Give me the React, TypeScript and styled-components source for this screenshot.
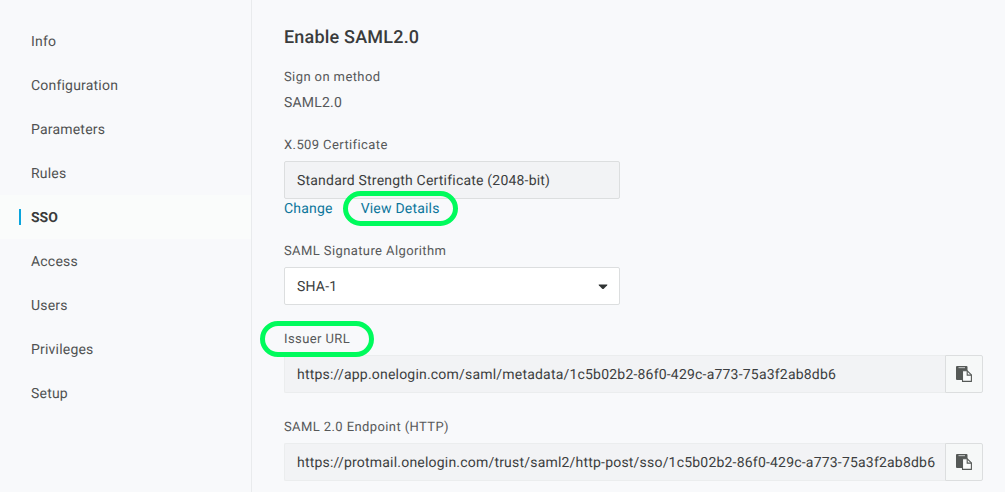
import React from "react";
import styled, { createGlobalStyle, css } from "styled-components";

const GlobalStyle = createGlobalStyle`
  *, *::before, *::after { box-sizing: border-box; }
  body {
    margin: 0;
    background: #f8f9fb;
    color: #56585a;
    font-family: Roboto, "Liberation Sans", sans-serif;
    font-size: 14px;
    overflow: hidden;
    text-rendering: geometricPrecision;
  }
`;

const Page = styled.div`
  display: flex;
  height: 492px;
  overflow: hidden;
`;

const Sidebar = styled.nav`
  flex: 0 0 252px;
  padding-top: 19px;
  border-right: 1px solid #e9ebed;
`;

const NavItem = styled.a<{ $active?: boolean }>`
  display: flex;
  align-items: center;
  height: 44px;
  padding: 2px 0 0 19px;
  letter-spacing: 0.2px;
  color: #505252;

  &::before {
    content: "";
    width: 2px;
    height: 16px;
    margin: -2px 10px 0 0;
  }

  ${({ $active }) =>
    $active &&
    css`
      background: #fafcfb;
      color: #3a3c3c;
      font-weight: 700;
      letter-spacing: 0;
      &::before {
        background: #0aa5dd;
      }
    `}
`;

const Content = styled.main`
  flex: 1;
  min-width: 0;
  padding: 27px 22px 0 32px;
`;

const Title = styled.h1`
  margin: 0 0 20px;
  font-size: 18px;
  line-height: 22px;
  font-weight: 500;
  letter-spacing: 0.2px;
  color: #3a3c3c;
`;

const Field = styled.section<{ $gap: number }>`
  margin-bottom: ${({ $gap }) => $gap}px;
`;

const Label = styled.div`
  height: 16px;
  margin-bottom: 8px;
  font-size: 13px;
  line-height: 18px;
  letter-spacing: 0.4px;
  color: #565859;
`;

const Value = styled.div`
  height: 18px;
  line-height: 20px;
  letter-spacing: 0.2px;
`;

const Box = styled.div<{ $tone: "select" | "fixed" | "url" }>`
  display: flex;
  align-items: center;
  justify-content: space-between;
  height: 38px;
  min-width: 0;
  width: ${({ $tone }) => ($tone === "url" ? "auto" : "336px")};
  flex: ${({ $tone }) => ($tone === "url" ? "1" : "none")};
  padding: 2px ${({ $tone }) => ($tone === "url" ? "0" : "11px")} 0 12px;
  border: 1px solid ${({ $tone }) => ($tone === "url" ? "#ebedee" : "#dcdedf")};
  border-right-width: ${({ $tone }) => ($tone === "url" ? "0" : "1px")};
  border-radius: ${({ $tone }) => ($tone === "url" ? "2px 0 0 2px" : "2px")};
  background: ${({ $tone }) => ($tone === "select" ? "#fff" : "#f2f3f5")};
  letter-spacing: 0.2px;
  color: #3c3e40;
  white-space: nowrap;
`;

const UrlRow = styled.div`
  display: flex;
`;

const CopyButton = styled.button`
  display: flex;
  flex: none;
  align-items: center;
  justify-content: center;
  width: 38px;
  height: 38px;
  padding: 0;
  border: 1px solid #dcdedf;
  border-radius: 0 2px 2px 0;
  background: #f6f8f8;
`;

const Links = styled.div`
  display: flex;
  gap: 28px;
  height: 19px;
  line-height: 21px;
  color: #0c769c;
  letter-spacing: 0.2px;
`;

const Marked = styled.span<{ $ring: string }>`
  position: relative;
  &::after {
    content: "";
    position: absolute;
    inset: ${({ $ring }) => $ring};
    border: 5px solid #00fb5c;
    border-radius: 18px;
  }
`;

const Caret = () => (
  <svg width="10" height="6" viewBox="0 0 10 6">
    <path d="M1 0.5H9Q9.8 0.5 9.2 1.3L5.8 4.7Q5 5.4 4.2 4.7L0.8 1.3Q0.2 0.5 1 0.5Z" fill="#303434" />
  </svg>
);

const PasteIcon = () => (
  <svg width="16" height="16" viewBox="0 0 16 16">
    <path d="M1 0H10.5Q11.5 0 11.5 1V5H6V14H1Q0 14 0 13V1Q0 0 1 0Z" fill="#555957" />
    <path d="M2.5 1H9V2.2H2.5Z" fill="#b4b7b6" />
    <path d="M6.5 4.8H11.3L15.4 8.9V15.4H6.5Z" fill="#fbfcfc" stroke="#555957" strokeWidth="1.1" strokeLinejoin="round" />
    <path d="M11.2 4.8V9.1H15.4" fill="none" stroke="#555957" strokeWidth="1.1" />
  </svg>
);

const navItems = ["Info", "Configuration", "Parameters", "Rules", "SSO", "Access", "Users", "Privileges", "Setup"];

const UrlField = ({ url }: { url: string }) => (
  <UrlRow>
    <Box $tone="url">{url}</Box>
    <CopyButton aria-label="Copy">
      <PasteIcon />
    </CopyButton>
  </UrlRow>
);

export default function App() {
  return (
    <>
      <GlobalStyle />
      <Page>
        <Sidebar>
          {navItems.map((item) => (
            <NavItem key={item} $active={item === "SSO"}>
              {item}
            </NavItem>
          ))}
        </Sidebar>
        <Content>
          <Title>Enable SAML2.0</Title>
          <Field $gap={26}>
            <Label>Sign on method</Label>
            <Value>SAML2.0</Value>
          </Field>
          <Field $gap={25}>
            <Label>X.509 Certificate</Label>
            <Box $tone="fixed">Standard Strength Certificate (2048-bit)</Box>
            <Links>
              <span>Change</span>
              <Marked $ring="-8px -18px -8px -18px">View Details</Marked>
            </Links>
          </Field>
          <Field $gap={26}>
            <Label>SAML Signature Algorithm</Label>
            <Box $tone="select">
              SHA-1
              <Caret />
            </Box>
          </Field>
          <Field $gap={26}>
            <Label>
              <Marked $ring="-11px -24px -10px -24px">Issuer URL</Marked>
            </Label>
            <UrlField url="https://app.onelogin.com/saml/metadata/1c5b02b2-86f0-429c-a773-75a3f2ab8db6" />
          </Field>
          <Field $gap={0}>
            <Label>SAML 2.0 Endpoint (HTTP)</Label>
            <UrlField url="https://protmail.onelogin.com/trust/saml2/http-post/sso/1c5b02b2-86f0-429c-a773-75a3f2ab8db6" />
          </Field>
        </Content>
      </Page>
    </>
  );
}
